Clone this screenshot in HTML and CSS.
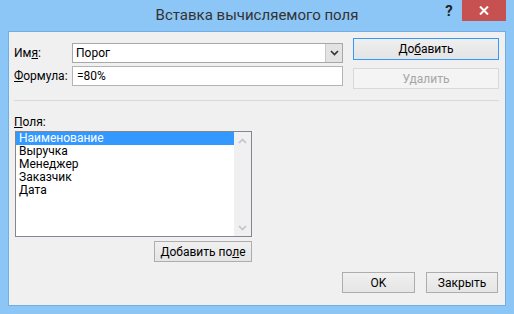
FILE: index.html
```html
<!DOCTYPE html>
<html lang="ru">
<head>
    <meta charset="UTF-8">
    <title>Вставка вычисляемого поля</title>
    <link rel="stylesheet" href="styles.css">
</head>
<body>
    <div class="window">
        <!-- Title bar -->
        <div class="titlebar">
            <span></span>
            <div class="title">Вставка вычисляемого поля</div>
            <div class="controls">
                <span class="help">?</span>
                <span class="close">
                    <svg width="10" height="9" viewBox="0 0 10 9">
                        <path d="M1 0.5 L9 8.5 M9 0.5 L1 8.5" stroke="#fff" stroke-width="2"/>
                    </svg>
                </span>
            </div>
        </div>

        <div class="client">
            <div class="top">
                <div class="fields">
                    <label>Им<u>я</u>:</label>
                    <div class="combo">
                        <span class="value">Порог</span>
                        <span class="drop">
                            <svg width="9" height="6" viewBox="0 0 9 6">
                                <path d="M1 1 L4.5 4.5 L8 1" fill="none" stroke="#333" stroke-width="1.6"/>
                            </svg>
                        </span>
                    </div>
                    <label><u>Ф</u>ормула:</label>
                    <div class="input">=80%</div>
                </div>
                <div class="side">
                    <button class="btn btn-default">До<u>б</u>авить</button>
                    <button class="btn btn-disabled">Удалить</button>
                </div>
            </div>

            <div class="sep"></div>

            <div class="list-block">
                <label><u>П</u>оля:</label>
                <div class="listbox">
                    <ul class="items">
                        <li class="selected">Наименование</li>
                        <li>Выручка</li>
                        <li>Менеджер</li>
                        <li>Заказчик</li>
                        <li>Дата</li>
                    </ul>
                    <div class="scrollbar">
                        <svg width="9" height="6" viewBox="0 0 9 6">
                            <path d="M1 5 L4.5 1.5 L8 5" fill="none" stroke="#c4c4c4" stroke-width="1.6"/>
                        </svg>
                        <svg width="9" height="6" viewBox="0 0 9 6">
                            <path d="M1 1 L4.5 4.5 L8 1" fill="none" stroke="#c4c4c4" stroke-width="1.6"/>
                        </svg>
                    </div>
                </div>
                <button class="btn add-field">Добавить по<u>л</u>е</button>
            </div>

            <div class="footer">
                <button class="btn btn-ok">OK</button>
                <button class="btn btn-close">Закрыть</button>
            </div>
        </div>
    </div>
</body>
</html>
```

FILE: styles.css
```css
/* Windows 8 style dialog */
body {
    margin: 0;
    padding: 0;
    font-family: Roboto, "Noto Sans", sans-serif;
    font-size: 12px;
    color: #000;
}
.window {
    width: 514px;
    height: 314px;
    background: #8cc6f6;
    box-sizing: border-box;
    display: flex;
    flex-direction: column;
}
.titlebar {
    height: 31px;
    display: grid;
    grid-template-columns: 1fr auto 1fr;
}
.title {
    font-size: 15px;
    line-height: 31px;
    color: #333;
}
.controls {
    justify-self: end;
    display: flex;
    align-items: flex-start;
    margin-right: 8px;
}
.help {
    width: 26px;
    height: 21px;
    text-align: center;
    font-weight: bold;
    font-size: 15px;
    line-height: 23px;
    color: #222;
}
.close {
    width: 44px;
    height: 21px;
    background: #c75050;
    display: flex;
    align-items: center;
    justify-content: center;
}
.client {
    margin: 0 8px 8px 8px;
    height: 275px;
    box-sizing: border-box;
    border: 1px solid #74ade2;
    background: #f0f0f0;
    display: flex;
    flex-direction: column;
}
.top {
    display: flex;
    align-items: flex-start;
    padding: 6px 6px 0 5px;
}
.fields {
    margin-top: 5px;
    display: grid;
    grid-template-columns: 58px 271px;
    grid-auto-rows: 20px;
    row-gap: 3px;
}
.fields label {
    line-height: 20px;
}
.combo, .input {
    box-sizing: border-box;
    background: #fff;
    border: 1px solid #a8a8a8;
    display: flex;
    align-items: center;
}
.combo .value, .input {
    padding-left: 4px;
}
.combo .value {
    flex: 1;
    padding-left: 3px;
}
.input {
    border-color: #b4b4b4;
}
.combo .drop {
    width: 16px;
    height: 18px;
    background: #e3e3e3;
    border-left: 1px solid #c8c8c8;
    display: flex;
    align-items: center;
    justify-content: center;
}
.side {
    margin-left: 10px;
    width: 146px;
    display: flex;
    flex-direction: column;
    gap: 8px;
}
.btn {
    font-family: inherit;
    font-size: 12px;
    color: #000;
    padding: 0;
    height: 21px;
    box-sizing: border-box;
    border: 1px solid #adadad;
    background: linear-gradient(#f0f0f0, #e5e5e5);
}
.btn-default {
    height: 22px;
    border-color: #3399ff;
    background: linear-gradient(#efefef, #e4e4e4);
}
.btn-disabled {
    color: #a6a6a6;
    border-color: #d9d9d9;
    background: #f4f4f4;
}
.sep {
    height: 1px;
    background: #d9d9d9;
    margin: 11px 6px 0 5px;
}
.list-block {
    display: flex;
    flex-direction: column;
    align-items: flex-start;
    padding-left: 6px;
    width: 237px;
}
.list-block label {
    margin-top: 14px;
    margin-left: -1px;
    line-height: 15px;
    height: 15px;
}
.listbox {
    margin-top: 1px;
    width: 237px;
    height: 106px;
    box-sizing: border-box;
    border: 1px solid #828790;
    background: #fff;
    display: flex;
}
.items {
    flex: 1;
    list-style: none;
    margin: 0;
    padding: 0;
}
.items li {
    height: 13px;
    line-height: 13px;
    padding-left: 3px;
}
.items li.selected {
    background: #3399ff;
    color: #fff;
}
.scrollbar {
    width: 17px;
    background: #f0f0f0;
    display: flex;
    flex-direction: column;
    justify-content: space-between;
    align-items: center;
    padding: 6px 0 5px;
    box-sizing: border-box;
}
.add-field {
    align-self: flex-end;
    margin-top: 4px;
    width: 98px;
}
.footer {
    display: flex;
    justify-content: flex-end;
    gap: 11px;
    padding-right: 7px;
    margin-top: 10px;
}
.btn-ok {
    width: 73px;
}
.btn-close {
    width: 72px;
}
```
